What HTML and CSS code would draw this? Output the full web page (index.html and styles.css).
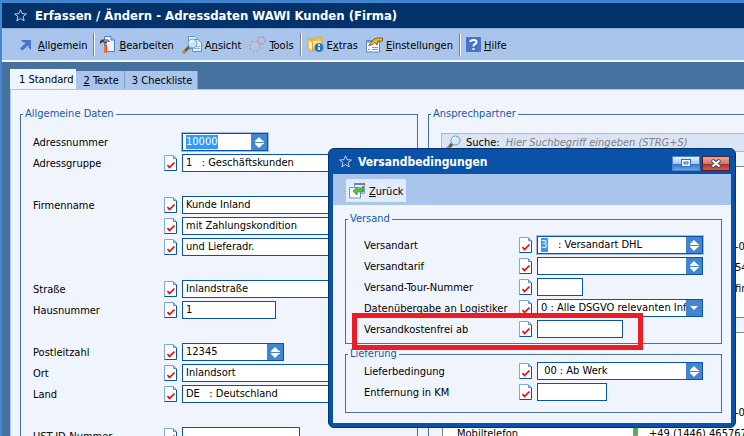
FILE: index.html
```
<!DOCTYPE html>
<html lang="de">
<head>
    <meta charset="UTF-8">
    <meta name="viewport" content="width=device-width, initial-scale=1.0">
    <title>Erfassen / Ändern - Adressdaten WAWI Kunden (Firma)</title>
    <link rel="stylesheet" href="styles.css">
</head>
<body>
    <!-- shared icons -->
    <svg class="sprite" aria-hidden="true">
        <symbol id="star" viewBox="0 0 12 12">
            <path d="M6 .8 7.5 4.3 11.4 4.6 8.4 7 9.4 11 6 8.8 2.6 11 3.6 7 .6 4.6 4.5 4.3Z" fill="none" stroke="#dbe7f8" stroke-width=".8"/>
        </symbol>
        <symbol id="check" viewBox="0 0 13 16">
            <path d="M.5 .5H9L12.5 4V15.5H.5Z" fill="#fff"/>
            <path d="M.5 15.5V.5H9" fill="none" stroke="#7fa8de"/>
            <path d="M.5 15.5H12.5V4L9 .5" fill="none" stroke="#0b52a6"/>
            <path d="M9.5 1V3.5H12" fill="#cfe0f7" stroke="#4f8ed8"/>
            <path d="M3.5 10 5.5 12.5 10.5 7.5" fill="none" stroke="#f00000" stroke-width="1.6"/>
        </symbol>
        <symbol id="spin" viewBox="0 0 16 16">
            <path d="M8 3 12 7H4ZM8 14 12 10H4Z" fill="#fff"/>
            <path d="M4 7.5H13M4 9.5H13" stroke="#fff"/>
            <path d="M4 8.5H13" stroke="#4285d0"/>
        </symbol>
        <symbol id="lens" viewBox="0 0 16 16">
            <path d="M6 9 1 14.5" stroke="#c07a35" stroke-width="3"/>
            <path d="M6 9 4 11.5" stroke="#5a5f78" stroke-width="3"/>
            <circle cx="9.5" cy="5.5" r="4.5" fill="#c8ecfb" stroke="#7795bd"/>
            <path d="M7 5a3 3 0 0 1 3-2.5" fill="none" stroke="#fff" stroke-width="1.5"/>
        </symbol>
    </svg>

    <div class="window">
        <header class="titlebar">
            <svg class="star"><use href="#star"/></svg>
            <h1>Erfassen / Ändern - Adressdaten WAWI Kunden (Firma)</h1>
        </header>

        <nav class="toolbar">
            <div class="group">
                <button class="tool">
                    <svg width="16" height="16" viewBox="0 0 16 16"><path d="M4 3H14V13L11.5 10.5V8L5.5 13.5 3 11.500 9 5.500H6.500Z" fill="#4a72cc"/></svg>
                    <span><u>A</u>llgemein</span>
                </button>
            </div>
            <div class="group">
                <button class="tool">
                    <svg width="16" height="17" viewBox="0 0 16 17"><path d="M4.500 .5H11L14.500 4V15.500H4.500Z" fill="#eef4fd" stroke="#4a7fc9"/><path d="M11 .5V4H14.500" fill="#9fc2f0" stroke="#4a7fc9"/><path d="M0 8V5L2 3.500H8L10 6 7 5.500V7H3.500V5.500L2 6.500Z" fill="#3c4044"/><path d="M4 5H8" stroke="#ccd2d8"/><path d="M5.500 7V10" stroke="#7a7f84" stroke-width="2"/><path d="M5.500 9V16.500" stroke="#e8431c" stroke-width="3"/><path d="M5 9.500V16" stroke="#ffa070"/></svg>
                    <span><u>B</u>earbeiten</span>
                </button>
                <button class="tool">
                    <svg width="20" height="18" viewBox="0 0 20 18"><path d="M6.500 .5H13L16.500 4V12.500H6.500Z" fill="#eef6fd" stroke="#5b90cf"/><path d="M10.500 3.500H16L19.500 7V15.500H10.500Z" fill="#e2effc" stroke="#5b90cf"/><path d="M12 12.500H18M12 10.500H18" stroke="#92b5df"/><path d="M7 11 1 17" stroke="#6e6240" stroke-width="3"/><path d="M3 15 1 17" stroke="#d7a63c" stroke-width="2"/><circle cx="10.500" cy="7.500" r="4.500" fill="#c5e8f8" stroke="#7d94aa"/><path d="M8 7a3 3 0 0 1 3-2.500" fill="none" stroke="#fff" stroke-width="1.500"/></svg>
                    <span>A<u>n</u>sicht</span>
                </button>
                <button class="tool">
                    <svg width="17" height="17" viewBox="0 0 17 17"><circle cx="6" cy="10.500" r="4.500" fill="none" stroke="#a3a3bf" stroke-width="2.500" stroke-dasharray="2 1.500"/><circle cx="6" cy="10.500" r="3" fill="none" stroke="#c0c0d6" stroke-width="3"/><circle cx="12.500" cy="4.500" r="3.200" fill="none" stroke="#a195b3" stroke-width="2" stroke-dasharray="2 1"/><circle cx="12.500" cy="4.500" r="2" fill="none" stroke="#c4bcd4" stroke-width="2"/></svg>
                    <span><u>T</u>ools</span>
                </button>
            </div>
            <div class="group">
                <button class="tool">
                    <svg width="17" height="17" viewBox="0 0 17 17"><path d="M1 3H8L10 1H15V12L13 14H5Z" fill="#f0c34a" stroke="#d9a536"/><path d="M1 3 5.500 6V15.500L1 12Z" fill="#fff0a8" stroke="#d9a536"/><path d="M6 5H14V12H6Z" fill="#ffe28a"/><circle cx="12" cy="11.500" r="4.500" fill="#2478c4"/><path d="M12 8V10M12 11V14" stroke="#fff" stroke-width="1.500"/></svg>
                    <span>E<u>x</u>tras</span>
                </button>
                <button class="tool">
                    <svg width="17" height="16" viewBox="0 0 17 16"><path d="M.5 3.500H13.500V15H.5Z" fill="#f4f8fe" stroke="#6487bd"/><path d="M1 4.500H13" stroke="#5d91dc" stroke-width="2"/><path d="M2 8.500H4M2 12.500H4M6 12.500H12M6 10.500H12" stroke="#7a99c9"/><path d="M3 8 8 2 11 1H16.500V4H12L11 8 9 5.500 6 8Z" fill="#f1b620" stroke="#66501c" stroke-width=".8"/></svg>
                    <span><u>E</u>instellungen</span>
                </button>
            </div>
            <div class="group">
                <button class="tool">
                    <svg width="15" height="15" viewBox="0 0 15 15"><rect width="15" height="15" rx="1" fill="#4a72cc"/><path d="M4.500 5V4.500Q4.500 3 7.500 3T10.500 5Q10.500 6.500 8.500 7.200 7.500 7.700 7.500 9.500M7.500 11V13" fill="none" stroke="#fff" stroke-width="2"/></svg>
                    <span><u>H</u>ilfe</span>
                </button>
            </div>
        </nav>

        <main class="workspace">
            <div class="tabs" role="tablist">
                <button class="tab active" role="tab" aria-selected="true">1 Standard</button>
                <button class="tab" role="tab"><u>2</u> Texte</button>
                <button class="tab" role="tab">3 Checkliste</button>
            </div>

            <div class="panel">
                <fieldset class="general">
                    <legend>Allgemeine Daten</legend>
                    <div class="rows">
                        <div class="row">
                            <label for="adressnummer">Adressnummer</label>
                            <div class="field focus w-86">
                                <input class="marked number" id="adressnummer" value="10000">
                                <button class="spin" aria-label="Adressnummer suchen"><svg><use href="#spin"/></svg></button>
                            </div>
                        </div>
                        <div class="row">
                            <label for="adressgruppe">Adressgruppe</label>
                            <svg class="check"><use href="#check"/></svg>
                            <div class="field wide"><input id="adressgruppe" value="1   : Geschäftskunden"></div>
                        </div>
                        <div class="row space">
                            <label for="name1">Firmenname</label>
                            <svg class="check"><use href="#check"/></svg>
                            <div class="field wide"><input id="name1" value="Kunde Inland"></div>
                        </div>
                        <div class="row">
                            <svg class="check"><use href="#check"/></svg>
                            <div class="field wide"><input aria-label="Firmenname 2" value="mit Zahlungskondition"></div>
                        </div>
                        <div class="row">
                            <svg class="check"><use href="#check"/></svg>
                            <div class="field wide"><input aria-label="Firmenname 3" value="und Lieferadr."></div>
                        </div>
                        <div class="row space">
                            <label for="strasse">Straße</label>
                            <svg class="check"><use href="#check"/></svg>
                            <div class="field wide"><input id="strasse" value="Inlandstraße"></div>
                        </div>
                        <div class="row">
                            <label for="hausnummer">Hausnummer</label>
                            <svg class="check"><use href="#check"/></svg>
                            <div class="field w-94"><input id="hausnummer" value="1"></div>
                        </div>
                        <div class="row space">
                            <label for="plz">Postleitzahl</label>
                            <svg class="check"><use href="#check"/></svg>
                            <div class="field w-102">
                                <input id="plz" value="12345">
                                <button class="spin" aria-label="Postleitzahl suchen"><svg><use href="#spin"/></svg></button>
                            </div>
                        </div>
                        <div class="row">
                            <label for="ort">Ort</label>
                            <svg class="check"><use href="#check"/></svg>
                            <div class="field wide"><input id="ort" value="Inlandsort"></div>
                        </div>
                        <div class="row">
                            <label for="land">Land</label>
                            <svg class="check"><use href="#check"/></svg>
                            <div class="field wide"><input id="land" value="DE   : Deutschland"></div>
                        </div>
                        <div class="row space">
                            <label for="ustid">UST-ID-Nummer</label>
                            <svg class="check"><use href="#check"/></svg>
                            <div class="field w-118"><input id="ustid"></div>
                        </div>
                    </div>
                </fieldset>

                <fieldset class="contacts">
                    <legend>Ansprechpartner</legend>
                    <div class="search">
                        <svg class="lens"><use href="#lens"/></svg>
                        <label for="suche">Suche:</label>
                        <input id="suche" placeholder="Hier Suchbegriff eingeben (STRG+S)">
                    </div>
                    <div class="card first">
                        <p class="cut">-0</p>
                        <p class="cut">54-</p>
                        <p class="cut">fin</p>
                    </div>
                    <div class="card second">
                        <p class="cut">-0</p>
                        <p class="phone">
                            <span>Mobiltelefon</span>
                            <svg width="8" height="16" viewBox="0 0 8 16"><path d="M1 0H6V15H1Z" fill="#8c9498"/><path d="M2 1H5V8H2Z" fill="#4bb43a"/></svg>
                            <span>+49 (1446) 465767</span>
                        </p>
                    </div>
                </fieldset>
            </div>
        </main>
    </div>

    <section class="dialog" role="dialog" aria-labelledby="dialog-title">
        <header class="dialog-title">
            <svg class="star"><use href="#star"/></svg>
            <h2 id="dialog-title">Versandbedingungen</h2>
            <button class="control restore" aria-label="Wiederherstellen">
                <svg width="10" height="9" viewBox="0 0 10 9"><rect x=".5" y=".5" width="9" height="7" fill="#fff" stroke="#2f6fbd"/><rect x="3" y="3" width="4" height="2" fill="#dbe8fa" stroke="#2f6fbd"/></svg>
            </button>
            <button class="control close" aria-label="Schließen">
                <svg width="12" height="9" viewBox="0 0 12 9"><path d="M2 1 10 8M10 1 2 8" stroke="#4b4f60" stroke-width="4"/><path d="M2.5 1.5 9.5 7.5M9.5 1.5 2.5 7.5" stroke="#fff" stroke-width="2"/></svg>
            </button>
        </header>
        <div class="dialog-toolbar">
            <button class="back">
                <svg width="17" height="17" viewBox="0 0 17 17"><path d="M5.500 1.500H15.500V11.500H5.500Z" fill="#edf3fc" stroke="#86a2cb"/><path d="M5 2H16" stroke="#5a86d8" stroke-width="2"/><path d="M14 2H16" stroke="#e0503a" stroke-width="2"/><path d="M.5 5.500H11.500V16H.5Z" fill="#f7faff" stroke="#7991b5"/><path d="M4 9 8 5.500V7H13V4.500H14.500V10H8V13Z" fill="#63c23b" stroke="#318c22" stroke-width=".8"/></svg>
                <span><u>Z</u>urück</span>
            </button>
        </div>
        <div class="dialog-body">
            <fieldset class="shipping">
                <legend>Versand</legend>
                <div class="rows">
                    <div class="row">
                        <label for="versandart">Versandart</label>
                        <svg class="check"><use href="#check"/></svg>
                        <div class="field focus w-166">
                            <input class="marked code" id="versandart" value="3">
                            <span class="caption">: Versandart DHL</span>
                            <button class="spin" aria-label="Versandart suchen"><svg><use href="#spin"/></svg></button>
                        </div>
                    </div>
                    <div class="row">
                        <label for="tarif">Versandtarif</label>
                        <svg class="check"><use href="#check"/></svg>
                        <div class="field w-166">
                            <input id="tarif">
                            <button class="spin" aria-label="Versandtarif suchen"><svg><use href="#spin"/></svg></button>
                        </div>
                    </div>
                    <div class="row">
                        <label for="tour">Versand-Tour-Nummer</label>
                        <svg class="check"><use href="#check"/></svg>
                        <div class="field w-46"><input id="tour"></div>
                    </div>
                    <div class="row">
                        <label for="logistiker">Datenübergabe an Logistiker</label>
                        <svg class="check"><use href="#check"/></svg>
                        <div class="field w-166">
                            <select id="logistiker">
                                <option>0 : Alle DSGVO relevanten Inf</option>
                            </select>
                            <span class="spin arrow"><svg viewBox="0 0 16 16"><path d="M4 6H12L8 10Z" fill="#fff"/></svg></span>
                        </div>
                    </div>
                    <div class="row">
                        <label for="frei">Versandkostenfrei ab</label>
                        <svg class="check"><use href="#check"/></svg>
                        <div class="field w-86"><input id="frei"></div>
                    </div>
                </div>
            </fieldset>
            <fieldset class="delivery">
                <legend>Lieferung</legend>
                <div class="rows">
                    <div class="row">
                        <label for="lieferbedingung">Lieferbedingung</label>
                        <svg class="check"><use href="#check"/></svg>
                        <div class="field w-166">
                            <input id="lieferbedingung" value=" 00 : Ab Werk">
                            <button class="spin" aria-label="Lieferbedingung suchen"><svg><use href="#spin"/></svg></button>
                        </div>
                    </div>
                    <div class="row">
                        <label for="km">Entfernung in KM</label>
                        <svg class="check"><use href="#check"/></svg>
                        <div class="field w-70"><input id="km"></div>
                    </div>
                </div>
            </fieldset>
        </div>
        <div class="highlight"></div>
    </section>
</body>
</html>
```
FILE: styles.css
```
* {
    box-sizing: border-box;
}

body {
    margin: 0;
    height: 100vh;
    overflow: hidden;
    background: #4285d0;
    color: #000;
    font-family: 'DejaVu Sans Condensed', 'DejaVu Sans', sans-serif;
    font-size: 11px;
    line-height: 14px;
}

button,
input,
select {
    font: inherit;
    color: inherit;
    margin: 0;
    padding: 0;
    border: none;
    background: none;
}

svg {
    flex: none;
    display: block;
}

h1,
h2,
p {
    margin: 0;
    font-size: 13px;
    line-height: 16px;
    color: #fff;
}

.sprite {
    position: absolute;
    width: 0;
    height: 0;
}

.star {
    width: 13px;
    height: 13px;
}

.window {
    height: calc(100vh - 3px);
    margin: 3px 0 0 2px;
    overflow: hidden;
}

.titlebar {
    display: flex;
    align-items: center;
    gap: 8px;
    height: 25px;
    padding-left: 12px;
    background: #04336b;
    white-space: nowrap;
}

/* toolbar */
.toolbar {
    display: flex;
    align-items: center;
    height: 34px;
    padding-left: 9px;
    background: #a9c5ec;
    border-top: 1px solid #8fb0de;
    border-bottom: 2px solid #f0f5fd;
}

.group {
    display: flex;
    align-items: center;
    gap: 8px;
    height: 23px;
    padding: 0 6px;
    border-left: 1px solid #808080;
    box-shadow: inset 1px 0 #fff;
}

.group:first-child {
    border-left: none;
    box-shadow: none;
}

.tool {
    display: flex;
    align-items: center;
    gap: 3px;
}

.tool span,
.back span {
    padding-top: 2px;
}

.group:first-child .tool {
    gap: 5px;
}

/* tabs */
.workspace {
    padding-left: 8px;
    background: #46709d;
}

.tabs {
    display: flex;
    align-items: flex-end;
    height: 27px;
}

.tab {
    height: 18px;
    padding: 2px 5px 0 7px;
    background: #a9c5ec;
    border-right: 1px solid #7f9dc6;
}

.tab.active {
    height: 20px;
    padding: 2px 3px 0 9px;
    background: #f0f5fd;
    border-right: none;
}

.panel {
    display: flex;
    gap: 10px;
    padding: 17px 0 0 9px;
    background: #f0f5fd;
    border-top: 1px solid #a9c5ec;
    border-left: 1px solid #a9c5ec;
}

/* groups */
fieldset {
    min-width: 0;
    margin: 0;
    padding: 0 2px;
    border: 1px solid #46709d;
}

legend {
    padding: 0 2px;
    color: #1458ae;
}

.general {
    flex: 0 0 398px;
}

.rows {
    display: flex;
    flex-direction: column;
    gap: 3px;
    padding: 12px 10px;
}

.row {
    display: flex;
    justify-content: flex-start;
    align-items: center;
    height: 18px;
}

.row.space {
    margin-top: 21px;
}

.general .row {
    display: grid;
    grid-template-columns: 131px 18px auto;
    justify-content: start;
}

.row label {
    padding-top: 2px;
    white-space: nowrap;
}

.check {
    grid-column: 2;
    width: 13px;
    height: 16px;
}

.field {
    grid-column: 3;
    display: flex;
    align-items: center;
    height: 18px;
    background: #fff;
    border: 1px solid #0a52a8;
}

.field.focus {
    box-shadow: 0 0 0 1px #9dbbe3;
}

.field input {
    flex: 1;
    min-width: 0;
    height: 14px;
    padding: 0 3px;
    outline: none;
}

.field .marked {
    flex: none;
    margin: 0 auto 0 3px;
    padding: 0;
    color: #fff;
    background: #3399ff;
}

.field .number {
    width: 32px;
}

.field .code {
    width: 7px;
    margin-right: 10px;
}

.caption {
    flex: 1;
}

.wide {
    width: 220px;
}

.w-46 {
    width: 46px;
}

.w-70 {
    width: 70px;
}

.w-86 {
    width: 86px;
}

.w-94 {
    width: 94px;
}

.w-102 {
    width: 102px;
}

.w-118 {
    width: 118px;
}

.w-166 {
    width: 166px;
}

.spin {
    flex: none;
    width: 16px;
    height: 16px;
    background: #4285d0;
}

.spin svg {
    width: 16px;
    height: 16px;
}

select {
    flex: 1;
    min-width: 0;
    padding-left: 3px;
    appearance: none;
    outline: none;
    overflow: hidden;
}

.arrow {
    pointer-events: none;
}

/* contacts */
.contacts {
    flex: 1;
    border-right: none;
    padding-right: 0;
}

.search {
    display: flex;
    align-items: center;
    height: 19px;
    margin: 12px 0 14px 10px;
    padding-left: 4px;
    background: #dbe4f5;
    border: 1px solid #9dbbe3;
    border-right: none;
}

.lens {
    width: 16px;
    height: 16px;
    margin-right: 4px;
}

.search input {
    flex: 1;
    min-width: 0;
    padding-left: 6px;
    font-style: italic;
}

.search input::placeholder {
    color: #808080;
    opacity: 1;
}

.card {
    display: flex;
    flex-direction: column;
    margin-left: 11px;
    background: #fff;
    border: 1px solid #808080;
    border-right: none;
}

.card p {
    height: 21px;
    font-size: 11px;
    line-height: 21px;
    color: #000;
    white-space: nowrap;
}

.card .cut {
    align-self: flex-end;
    width: 9px;
}

.card.first {
    height: 152px;
    padding-top: 69px;
    margin-bottom: 14px;
}

.card.second {
    height: 152px;
    padding-top: 69px;
}

.card .phone {
    display: grid;
    grid-template-columns: 175px 17px auto;
    align-items: center;
    padding-left: 14px;
}

/* dialog */
.dialog {
    position: absolute;
    top: 148px;
    left: 328px;
    width: 408px;
    padding: 0 4px 4px;
    background: #0a52a8;
    border: 1px solid #04336b;
    border-radius: 6px;
}

.dialog-title {
    display: flex;
    align-items: center;
    gap: 2px;
    height: 25px;
    padding: 0 1px 0 6px;
}

.dialog-title h2 {
    flex: 1;
    margin-left: 4px;
    font-size: 12px;
}

.control {
    display: flex;
    align-items: center;
    justify-content: center;
    width: 28px;
    height: 15px;
    margin-top: 3px;
    border: 1px solid #4285d0;
}

.restore {
    background: linear-gradient(#e8f1fc 0%, #a8c8ee 50%, #2f73c4 51%, #6ca3e0 100%);
}

.close {
    background: linear-gradient(#e5aca3 0%, #cd7a6e 50%, #a82c1c 51%, #c96553 100%);
    border-color: #5a1a28;
}

.dialog-toolbar {
    height: 31px;
    padding: 5px 13px;
    background: #a9c5ec;
}

.back {
    display: flex;
    align-items: center;
    gap: 3px;
    height: 23px;
    padding: 0 2px 0 3px;
    background: #e0ebfb;
}

.dialog-body {
    display: flex;
    flex-direction: column;
    gap: 3px;
    padding: 7px 9px 10px 12px;
    background: #f0f5fd;
}

.dialog .rows {
    padding-left: 16px;
}

.dialog .row label {
    width: 155px;
}

.dialog .check {
    margin-right: 5px;
}

.shipping .rows {
    padding-top: 10px;
    padding-bottom: 5px;
}

.delivery .rows {
    padding-top: 1px;
    padding-bottom: 11px;
}

/* red frame laid over the free shipping row */
.highlight {
    position: absolute;
    top: 164px;
    left: 23px;
    width: 291px;
    height: 37px;
    border: 5px solid #ed1c24;
}
```
